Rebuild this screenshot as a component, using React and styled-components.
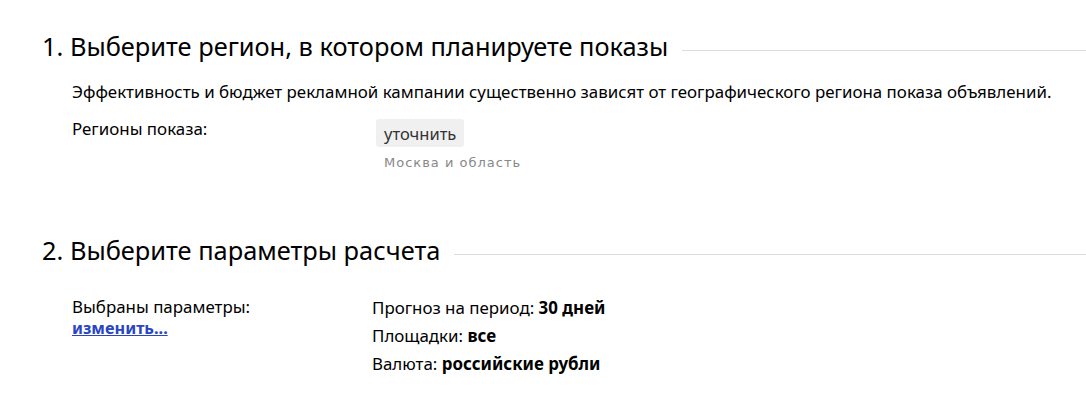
import React from "react";
import styled, { createGlobalStyle } from "styled-components";

const Global = createGlobalStyle`
  html, body { margin: 0; padding: 0; background: #fff; }
  body { font-family: "Noto Sans", "Open Sans", sans-serif; color: #000; }
`;

const Page = styled.div`
  padding: 28px 0 0 42px;
`;

const Section = styled.section`
  margin-bottom: ${(p) => p.$gap || 0}px;
`;

const Heading = styled.div`
  display: flex;
  align-items: center;
  gap: 14px;
  font-size: 25.4px;
  line-height: 36px;
  white-space: nowrap;
  &::after {
    content: "";
    flex: 1;
    height: 1px;
    background: #ddd;
    margin-top: 8px;
  }
`;

const Body = styled.div`
  padding-left: 30px;
  font-size: 16.9px;
`;

const Lead = styled.p`
  margin: 16px 0 15px;
  line-height: 24px;
`;

const Row = styled.div`
  display: grid;
  grid-template-columns: ${(p) => p.$col}px 1fr;
  margin-top: ${(p) => p.$top || 0}px;
`;

const Label = styled.div`
  line-height: 20px;
  padding-top: ${(p) => p.$pad || 0}px;
`;

const LabelStack = styled.div`
  display: flex;
  flex-direction: column;
  align-items: flex-start;
  gap: 1px;
  padding-top: 3px;
  line-height: 20px;
`;

const Value = styled.div`
  display: flex;
  flex-direction: column;
  align-items: flex-start;
`;

const Button = styled.button`
  font: inherit;
  font-size: 16.5px;
  color: #333;
  background: #f0f0f0;
  border: none;
  border-radius: 3px;
  padding: 0 8px;
  height: 28px;
  cursor: pointer;
`;

const Note = styled.div`
  font-family: "DejaVu Sans", Verdana, sans-serif;
  font-size: 13px;
  letter-spacing: 1px;
  line-height: 15px;
  color: #888;
  margin: 8px 0 0 8px;
`;

const Link = styled.a`
  font-weight: bold;
  font-size: 16.3px;
  color: #2a45c2;
  text-decoration: underline;
`;

const Line = styled.div`
  line-height: 28px;
  b { font-weight: bold; }
`;

export default function App() {
  return (
    <>
      <Global />
      <Page>
        <Section $gap={62}>
          <Heading>1. Выберите регион, в котором планируете показы</Heading>
          <Body>
            <Lead>
              Эффективность и бюджет рекламной кампании существенно зависят от географического региона показа объявлений.
            </Lead>
            <Row $col={304}>
              <Label>Регионы показа:</Label>
              <Value>
                <Button>уточнить</Button>
                <Note>Москва и область</Note>
              </Value>
            </Row>
          </Body>
        </Section>
        <Section>
          <Heading>2. Выберите параметры расчета</Heading>
          <Body>
            <Row $col={300} $top={26}>
              <LabelStack>
                <span>Выбраны параметры:</span>
                <Link href="#">изменить...</Link>
              </LabelStack>
              <Value>
                <Line>Прогноз на период: <b>30 дней</b></Line>
                <Line>Площадки: <b>все</b></Line>
                <Line>Валюта: <b>российские рубли</b></Line>
              </Value>
            </Row>
          </Body>
        </Section>
      </Page>
    </>
  );
}
